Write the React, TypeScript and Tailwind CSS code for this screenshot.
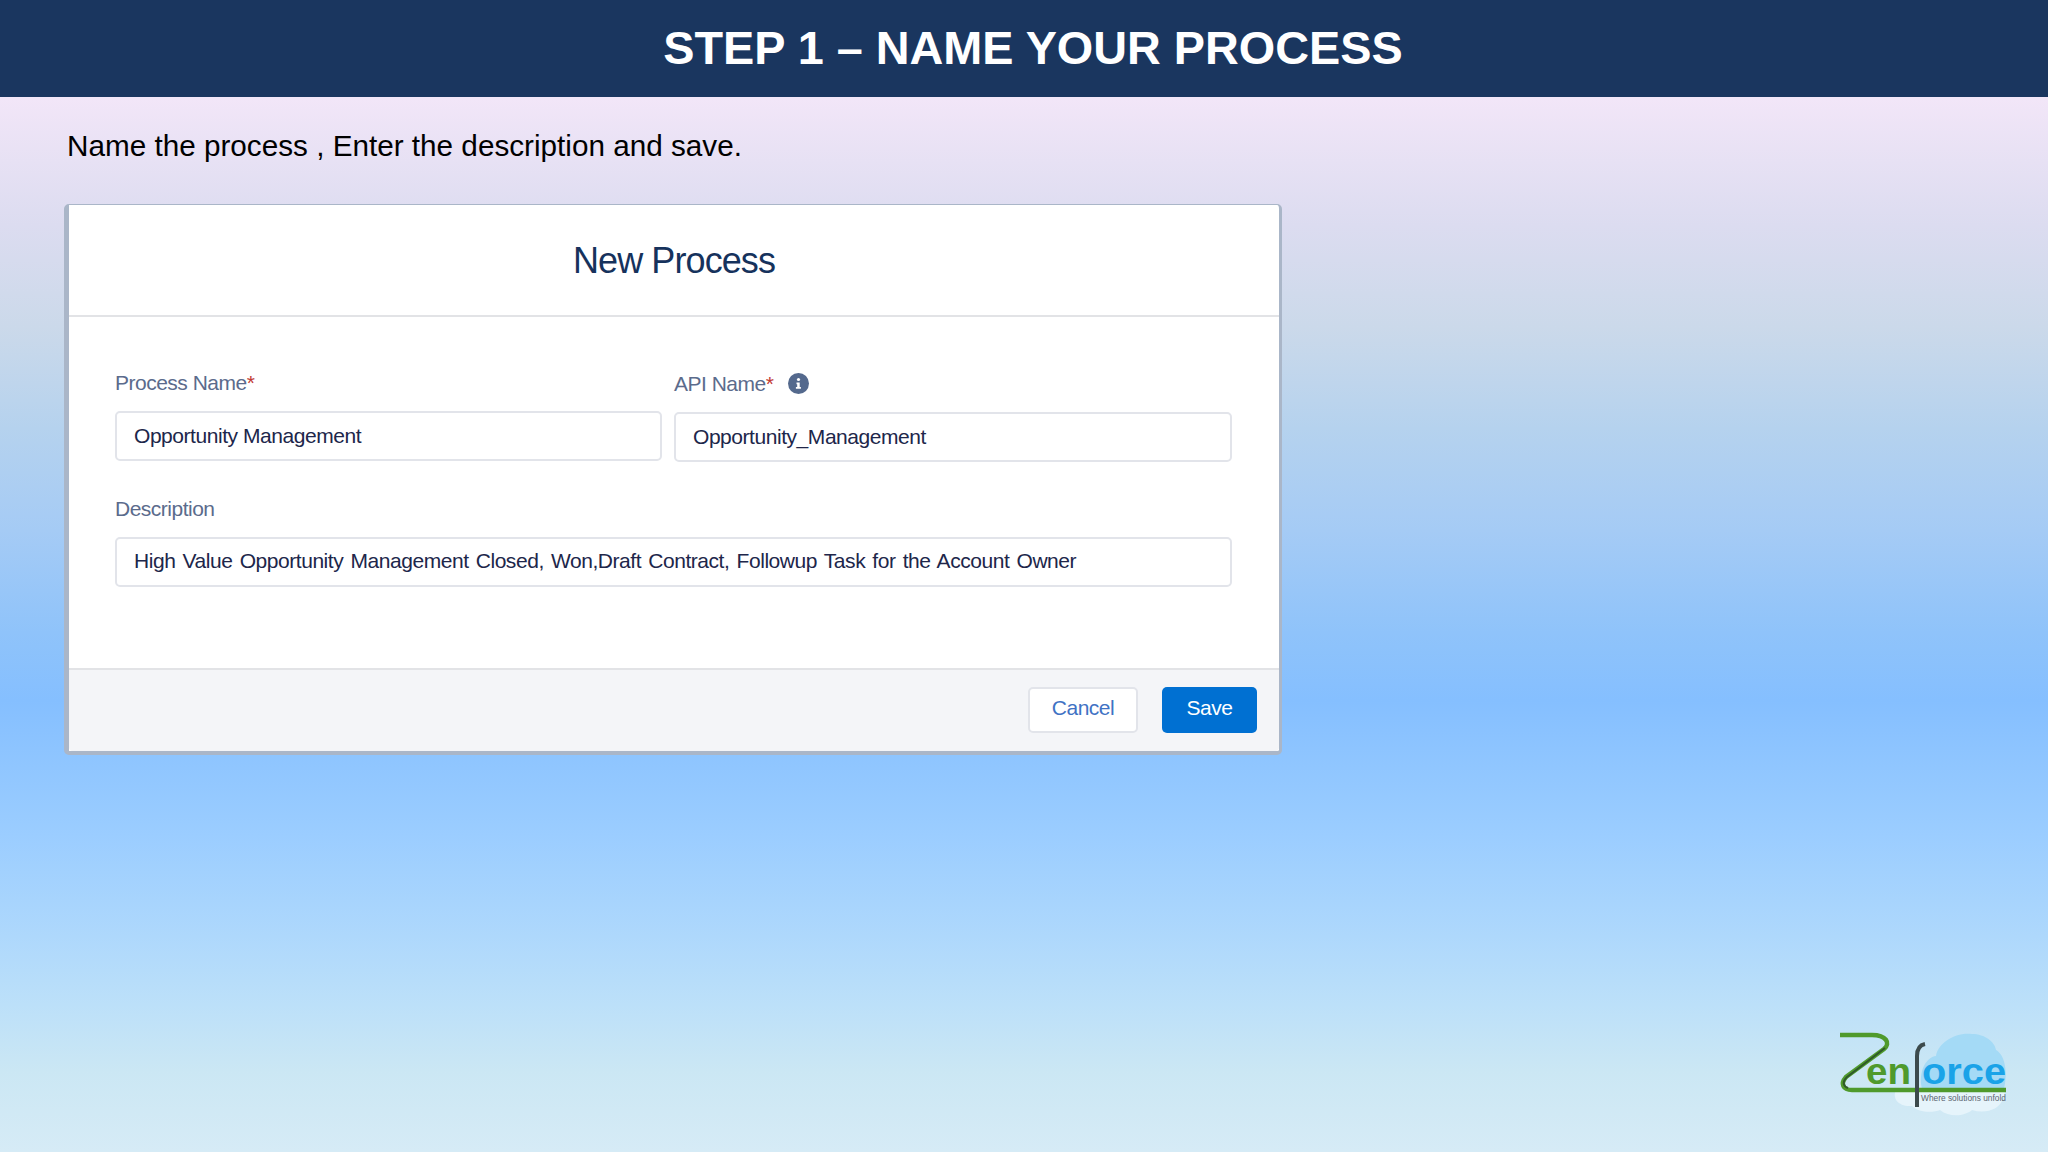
import React from 'react';

const sans = "font-['Liberation_Sans',Arial,sans-serif]";

const ZenforceLogo: React.FC = () => (
  <svg width="240" height="130" viewBox="0 0 240 130" fill="none">
    <path
      d="M96 80c-4 8 2 17 16 16 8 8 23 6 28 4 10 8 25 6 32 0 13 4 28 0 31-12l3-9z"
      fill="#e6f4fb"
    />
    <path
      d="M122 79c-4-17 4-32 14-33 2-13 19-24 36-22 13 0 23 8 24 16 9 5 12 22 8 39z"
      fill="#a4daf6"
    />
    <path
      d="M40 25h32c14 0 19 8 12 14L46 67c-6 7-3 13 6 13h154"
      stroke="#4f9a2c"
      strokeWidth="4.500"
    />
    <path d="M85 38L47 67c-5 5-4 9 1 11" stroke="#2f5a2a" strokeWidth="2" />
    <text x="66" y="74" fill="#4f9a2c" fontFamily="'Liberation Sans', sans-serif" fontSize="37" fontWeight="700" textLength="45" lengthAdjust="spacingAndGlyphs">en</text>
    <text x="122" y="74" fill="#1aa3e8" fontFamily="'Liberation Sans', sans-serif" fontSize="37" fontWeight="700" textLength="84" lengthAdjust="spacingAndGlyphs">orce</text>
    <path d="M117 97V46c0-8 3-11 8-12" stroke="#3c4a4c" strokeWidth="4" />
    <text x="121" y="91" fill="#5c6670" fontFamily="'Liberation Sans', sans-serif" fontSize="9" textLength="85" lengthAdjust="spacingAndGlyphs">Where solutions unfold</text>
  </svg>
);

const Field: React.FC<{ value: string; className?: string }> = ({ value, className }) => (
  <div className={`h-[50px] flex items-center pl-[17px] bg-white border-2 border-[#e2e4ea] rounded-[5px] text-[21px] tracking-[-0.45px] text-[#20264a] ${className ?? 'pb-[1px]'}`}>
    {value}
  </div>
);

const App: React.FC = () => {
  return (
    <div className={`w-[2048px] h-[1152px] flex flex-col overflow-hidden ${sans} bg-[linear-gradient(180deg,#f2e6f8_8.5%,#dcdcf0_19.5%,#cbd9ea_28.4%,#b5d2ee_37.2%,#a5cbf5_46%,#8fc3fa_54.9%,#85bfff_60.8%,#9bcdff_72.5%,#aed8fc_81.3%,#bce0f9_87.2%,#cbe7f4_93%,#d6ebf6_100%)]`}>
      {/* Title bar */}
      <div className="h-[97px] shrink-0 bg-[#1a365f] flex items-center justify-center pl-[18px]">
        <h1 className="text-white font-bold text-[46.800px] leading-none">STEP 1 – NAME YOUR PROCESS</h1>
      </div>

      <p className="mt-[30px] ml-[67px] text-[29.700px] leading-[38px] text-black">
        Name the process , Enter the description and save.
      </p>

      {/* New Process dialog */}
      <div className="mt-[39px] ml-[64px] w-[1218px] h-[551px] shrink-0 flex flex-col bg-white rounded-[5px] border-[#aab6c8] border-t-[1px] border-l-[5px] border-r-[3px] border-b-[4px]">
        <div className="h-[112px] shrink-0 flex items-center justify-center border-b-2 border-[#e2e3e6] pt-[2px]">
          <h2 className="text-[36px] tracking-[-0.9px] text-[#16325c]">New Process</h2>
        </div>

        <div className="flex-1 pl-[46px] pr-[47px]">
          <div className="flex gap-[12px] mt-[50px]">
            <div className="w-[547px]">
              <label className="block h-[44px] text-[21px] tracking-[-0.5px] text-[#5b6b8c]">
                Process Name<span className="text-[#c23934]">*</span>
              </label>
              <Field value="Opportunity Management" />
            </div>
            <div className="flex-1 mt-[1px]">
              <label className="flex items-start gap-[15px] h-[44px] text-[21px] tracking-[-0.5px] text-[#5b6b8c]">
                <span>API Name<span className="text-[#c23934]">*</span></span>
                <svg width="21" height="21" viewBox="0 0 21 21" className="mt-[5px]">
                  <circle cx="10.500" cy="10.500" r="10.500" fill="#54698d" />
                  <circle cx="10.500" cy="6.500" r="1.600" fill="#fff" />
                  <path d="M8.500 9.500h3.200v4.500h1.200v1.800h-5v-1.800h1.300v-2.700h-.7z" fill="#fff" />
                </svg>
              </label>
              <Field value="Opportunity_Management" />
            </div>
          </div>
          <div className="mt-[31px]">
            <label className="block h-[44px] text-[21px] tracking-[-0.5px] text-[#5b6b8c]">Description</label>
            <Field value="High Value Opportunity Management Closed, Won,Draft Contract, Followup Task for the Account Owner" className="pb-[3px] [word-spacing:1.800px]" />
          </div>
        </div>

        <div className="h-[83px] shrink-0 flex items-center justify-end gap-[24px] pr-[22px] pb-[2px] bg-[#f4f5f8] border-t-2 border-[#e2e3e6] rounded-b-[4px]">
          <button className="w-[110px] h-[46px] pb-[3px] bg-white border-2 border-[#e2e4ea] rounded-[5px] text-[21px] tracking-[-0.5px] text-[#3f72c4]">Cancel</button>
          <button className="w-[95px] h-[46px] pb-[3px] bg-[#0070d2] rounded-[5px] text-[21px] tracking-[-0.5px] text-white">Save</button>
        </div>
      </div>

      {/* Logo */}
      <div className="mt-auto flex justify-end pr-[8px] pb-[12px]">
        <ZenforceLogo />
      </div>
    </div>
  );
};

export default App;
